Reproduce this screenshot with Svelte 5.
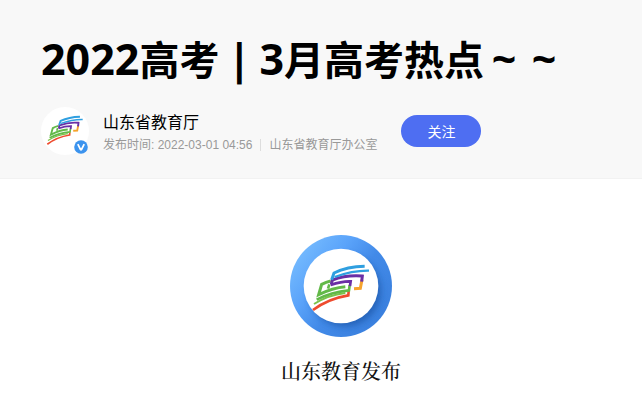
<script>
  const account = '山东省教育厅';
  const published = '2022-03-01 04:56';
  const office = '山东省教育厅办公室';
</script>

{#snippet mark()}
  <g fill="none" stroke-linejoin="miter">
    <path d="M28 147Q70 120 122 114" stroke="#7cc24a" stroke-width="6" />
    <path d="M25 165Q70 131 131 121L132 108" stroke="#ee4b2e" stroke-width="8" />
    <path d="M78 78Q64 81 51 88L42 119Q84 98 122 95" stroke="#62b948" stroke-width="9" />
    <path d="M74 88L70 101" stroke="#62b948" stroke-width="8" />
    <path d="M36 134Q80 111 133 106L135 90" stroke="#62b948" stroke-width="8" />
    <path d="M172 74L167 100L148 101" stroke="#f6a32c" stroke-width="9" />
    <path d="M80 88L83 75Q125 59 173 63L171 80" stroke="#6a2fa5" stroke-width="9" />
    <path d="M78 90Q112 78 138 79L136 93" stroke="#6a2fa5" stroke-width="8" />
    <path d="M180 34Q128 35 88 54L81 74" stroke="#2f9fe0" stroke-width="9" />
    <path d="M193 47Q145 46 90 66" stroke="#2f9fe0" stroke-width="7" />
  </g>
{/snippet}

<main>
  <header>
    <h1><span>2022</span>高考<span class="slot">|</span><span>3</span>月高考热点<span class="slot">~</span><span class="slot">~</span></h1>
    <div class="author">
      <a class="avatar" href="#account" aria-label={account}>
        <svg class="face" viewBox="0 0 228 228" aria-hidden="true">
          <circle cx="114" cy="114" r="114" fill="#fff" />
          <g transform="translate(5 12)">{@render mark()}</g>
        </svg>
        <svg class="badge" viewBox="0 0 14 14" aria-hidden="true">
          <circle cx="7" cy="7" r="6.8" fill="#3b93ee" />
          <path d="M3.8 4.2L6.5 9.5Q7 10.3 7.5 9.5L10.2 4.2" fill="none" stroke="#fff" stroke-width="1.7" />
        </svg>
      </a>
      <div class="info">
        <a class="name" href="#account">{account}</a>
        <p><time datetime="2022-03-01T04:56">发布时间: {published}</time><span>{office}</span></p>
      </div>
      <button type="button">关注</button>
    </div>
  </header>

  <figure>
    <svg viewBox="-44 -60 306 306" aria-hidden="true">
      <defs>
        <linearGradient id="ring" x1="0" y1="0.15" x2="0.9" y2="0.85">
          <stop offset="0" stop-color="#7abfff" />
          <stop offset="0.35" stop-color="#5aa3fa" />
          <stop offset="0.6" stop-color="#428ae8" />
          <stop offset="1" stop-color="#3a80de" />
        </linearGradient>
        <filter id="shade" x="-20%" y="-20%" width="150%" height="150%">
          <feGaussianBlur stdDeviation="10" />
        </filter>
        <clipPath id="disc"><circle cx="109" cy="93" r="153" /></clipPath>
      </defs>
      <circle cx="109" cy="93" r="153" fill="url(#ring)" />
      <g clip-path="url(#disc)">
        <circle cx="121" cy="107" r="108" fill="#1f56a8" opacity="0.7" filter="url(#shade)" />
      </g>
      <circle cx="109" cy="93" r="112" fill="#fff" />
      {@render mark()}
    </svg>
    <figcaption>山东教育发布</figcaption>
  </figure>
</main>

<style>
  :global(body) {
    margin: 0;
    background: #fff;
  }
  main {
    font-family: "Liberation Sans", "Noto Sans CJK SC", sans-serif;
  }
  header {
    padding: 28px 0 23px 41px;
    background: #f8f8f8;
    border-bottom: 1px solid #f2f2f2;
  }
  h1 {
    margin: 0 0 18px;
    font: 700 40px/60px "Noto Sans CJK SC", sans-serif;
    color: #000;
    white-space: nowrap;
  }
  h1 span {
    font: 700 43px/60px "Noto Sans", sans-serif;
  }
  h1 .slot {
    display: inline-block;
    width: 40px;
    text-align: center;
  }
  .author {
    display: flex;
    align-items: center;
  }
  .avatar {
    position: relative;
    width: 48px;
    height: 48px;
    margin-right: 14px;
  }
  .face {
    display: block;
    width: 48px;
    height: 48px;
  }
  .badge {
    position: absolute;
    right: 1px;
    bottom: 1px;
    width: 14px;
    height: 14px;
  }
  .info {
    padding-top: 4px;
  }
  .name {
    display: block;
    font-size: 16px;
    line-height: 24px;
    color: #000;
    text-decoration: none;
  }
  p {
    display: flex;
    align-items: center;
    margin: 0;
    font-size: 12px;
    line-height: 20px;
    color: #999;
    white-space: nowrap;
  }
  p span {
    margin-left: 8px;
    padding-left: 8px;
    line-height: 12px;
    border-left: 1px solid #ddd;
  }
  button {
    width: 80px;
    height: 32px;
    margin-left: 24px;
    padding: 0;
    border: 0;
    border-radius: 16px;
    background: #4e6ef2;
    color: #fff;
    font: 14px/32px "Noto Sans CJK SC", sans-serif;
  }
  figure {
    display: flex;
    flex-direction: column;
    align-items: center;
    margin: 0 1px 0 41px;
    padding-top: 56px;
  }
  figure svg {
    width: 102px;
    height: 102px;
  }
  figcaption {
    margin-top: 20px;
    font: 500 20px/28px "Noto Serif CJK SC", "Noto Sans CJK SC", serif;
    color: #111;
  }
</style>
